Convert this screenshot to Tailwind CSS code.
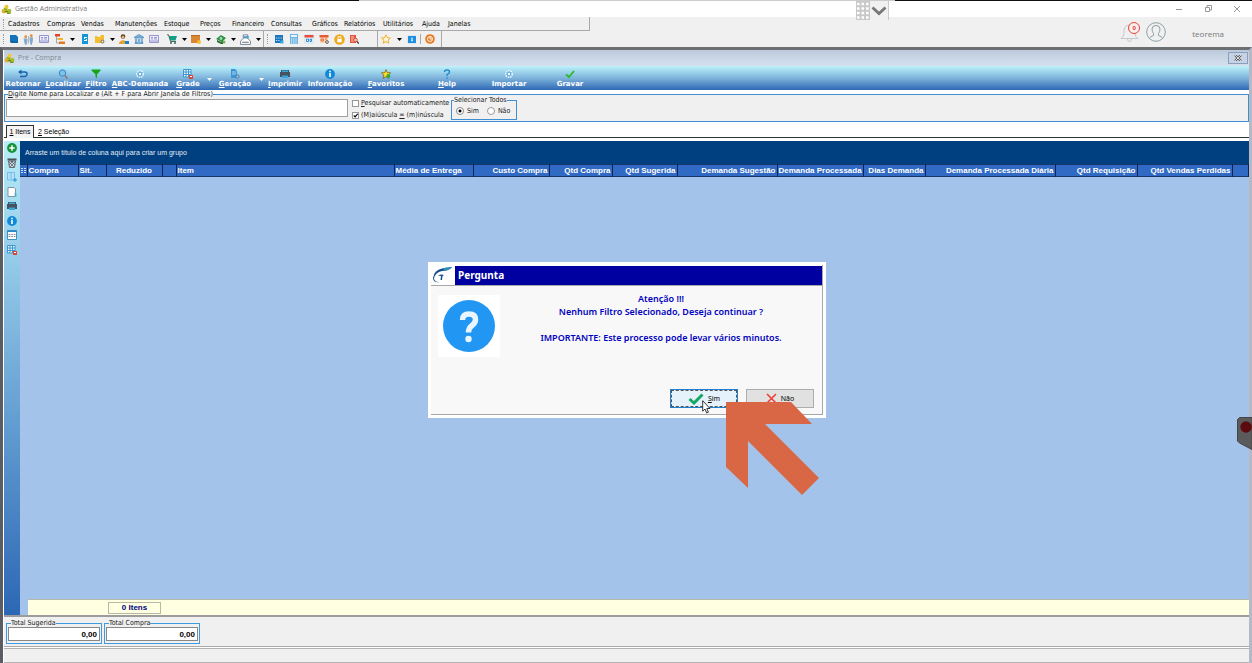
<!DOCTYPE html>
<html lang="pt-BR">
<head>
  <meta charset="UTF-8">
  <meta name="viewport" content="width=device-width, initial-scale=1">
  <title>Gestão Administrativa</title>
  <script src="https://cdn.jsdelivr.net/npm/@tailwindcss/browser@4"></script>
</head>
<body class="h-screen overflow-hidden bg-[#f0f0f0] font-['DejaVu_Sans_Condensed','DejaVu_Sans',sans-serif] text-[7px] leading-[10px] text-[#222]">

  <!-- shared icons -->
  <svg class="hidden">
    <symbol id="logo" viewBox="0 0 12 12"><path fill="#8fae22" d="M3 4h4v3h4v3l-4 1-1-2H1V6h2z"/><circle cx="6" cy="3" r="2.2" fill="#f2c62e"/><circle cx="3" cy="8" r="2.3" fill="#dcb52a"/><circle cx="9" cy="7.5" r="2.3" fill="#a9bf2f"/><path fill="#5f7f1a" d="M4 8h4v1H4zM7 10h3v1H7z"/></symbol>
    <symbol id="down" viewBox="0 0 5 3"><path fill="currentColor" d="M0 0h5L2.500 3z"/></symbol>
    <symbol id="book" viewBox="0 0 10 10"><path fill="#1273b8" d="M1 1h6l2 2v6H2L1 8z"/><path stroke="#0a4f86" stroke-width=".7" d="M2 8h7"/></symbol>
    <symbol id="people" viewBox="0 0 10 10"><g fill="#d9924a"><circle cx="2.500" cy="2.500" r="1.300"/><circle cx="7.500" cy="1.500" r="1.300"/></g><path fill="#7fa9cf" d="M1 4h3v3L3 10H2L1 7zM6 3h3v3L8 10H7L6 6z"/><path stroke="#9a9a9a" stroke-width=".6" d="M5 2v7M0 5l1-1"/></symbol>
    <symbol id="card" viewBox="0 0 10 10"><path fill="#eef" stroke="#8b8bc8" stroke-width=".9" d="M.5 1.500h9v7h-9z"/><path stroke="#8b8bc8" stroke-width=".9" d="M2 3.500h2M5 3.500h3M2 5h2M5 5h3M1 7h8"/></symbol>
    <symbol id="tree" viewBox="0 0 10 10"><path fill="#e0452f" d="M0 0h5v2.500H0z"/><path fill="#f2b632" d="M3 4h5v2H3z"/><path fill="#e67a21" d="M4 7.500h6V10H4z"/><path fill="none" stroke="#777" stroke-width=".6" d="M1.500 2v7H5M1.500 5H3"/></symbol>
    <symbol id="phone" viewBox="0 0 10 10"><path fill="#1596d6" d="M2 0h6v10H2z"/><path fill="#fff" d="M4 3h3v1H5v1h2v2H4V6h2V5H4z"/></symbol>
    <symbol id="folder" viewBox="0 0 10 10"><path fill="#f5bd30" d="M0 2h2l1 1h2l1-2h3v8H0z"/><circle cx="7.500" cy="7.500" r="2" fill="#9a8d70"/><circle cx="7.500" cy="7.500" r=".7" fill="#fff"/></symbol>
    <symbol id="user" viewBox="0 0 10 10"><circle cx="4" cy="2.500" r="2.300" fill="#5d3d25"/><circle cx="4" cy="3.200" r="1.400" fill="#f0b072"/><path fill="#e8a12b" d="M0 10c0-5 8-5 8 0z"/><path fill="#1780cf" d="M6 7h4v3H6z"/></symbol>
    <symbol id="bank" viewBox="0 0 10 10"><path fill="#78aedb" stroke="#3d82bd" stroke-width=".6" d="M.5 3L5 .5 9.500 3v1h-9zM1 8.500h8v1H1z"/><path stroke="#3d82bd" stroke-width="1.200" d="M2 4.500v4M8 4.500v4"/><path fill="#a8d2ef" d="M3.500 4.500h3v4h-3z"/><path stroke="#2770af" stroke-width=".8" d="M5 5v3"/></symbol>
    <symbol id="cart" viewBox="0 0 10 10"><path fill="#12a083" d="M2 2h8L8.500 6.500H3.500z"/><path fill="none" stroke="#35584f" stroke-width=".9" d="M0 .8h1.500L3.500 7.500H9"/><circle cx="4" cy="9" r=".9" fill="#35584f"/><circle cx="8" cy="9" r=".9" fill="#35584f"/></symbol>
    <symbol id="box" viewBox="0 0 10 10"><path fill="#d98733" d="M0 1h9v8H0z"/><path fill="#b96922" d="M0 1h9v1H0z"/><circle cx="8" cy="8" r="2" fill="#f5bd30"/></symbol>
    <symbol id="money" viewBox="0 0 10 10"><path fill="#2f9146" d="M0 5l5-4 5 3-4 4z"/><circle cx="5" cy="4.500" r="1.400" fill="#a9dbb1"/><path fill="#226c34" d="M1 6l4 2 2-1v3H5L1 8z"/><circle cx="8" cy="8" r="1.500" fill="#7fb04a"/></symbol>
    <symbol id="report" viewBox="0 0 10 10"><path fill="#fff" stroke="#6a7b8a" stroke-width=".8" d="M.5 6.500L3 4V.8h4V4l2.500 2.500v3h-9z"/><path fill="#4d9bc8" d="M3 2h5v2H3z"/><path stroke="#555" stroke-width=".8" d="M2 7.500h6"/></symbol>
    <symbol id="calendar" viewBox="0 0 10 10"><path fill="#1a76bf" d="M1 1h8v8H1z"/><path fill="#c9e6fa" d="M2 3.500h1.200v1H2zM4.300 3.500h1.200v1H4.300zM6.600 3.500h1.200v1H6.600zM2 6h1.200v1H2zM4.300 6h1.200v1H4.300z"/><path fill="#39aeea" d="M6.500 6.500H9.500v3H6.500z"/></symbol>
    <symbol id="calc" viewBox="0 0 10 10"><path fill="#6db4e2" d="M1 0h8v10H1z"/><path fill="#e8f6ff" d="M2 1h6v2H2z"/><path stroke="#fff" stroke-dasharray="1.200 1" d="M2 5h6M2 7h6M2 9h6"/></symbol>
    <symbol id="month" viewBox="0 0 10 10"><path fill="#eef7fd" stroke="#a8cfe8" stroke-width=".5" d="M1 1h8v8H1z"/><path fill="#e54c3f" d="M.5 1h9v2.500h-9z"/><path stroke="#2183c9" stroke-width=".9" d="M2.500 5h2v2.500h-2zM6 5h1.500v2.500H6z" fill="none"/></symbol>
    <symbol id="monthgear" viewBox="0 0 10 10"><path fill="#f7d9b4" d="M1 1h8v8H1z"/><path fill="#e35b37" d="M.5 1h9v2.500h-9z"/><path stroke="#e35b37" stroke-width=".9" d="M2 5h2.500v2H2zM6 5h2" fill="none"/><circle cx="8" cy="8" r="1.400" fill="none" stroke="#666"/></symbol>
    <symbol id="lock" viewBox="0 0 10 10"><circle cx="5" cy="5" r="4.800" fill="#efa91d"/><path fill="#fff" d="M3 4.500h4V7.500H3z"/><path fill="none" stroke="#fff" stroke-width=".8" d="M3.700 4.500V2.500h2.600v2"/></symbol>
    <symbol id="find" viewBox="0 0 10 10"><path fill="#e8543b" d="M1 1h6v8H1z"/><path stroke="#fff" stroke-width=".7" d="M2 3h3M2 5h3M2 7h3"/><circle cx="6.500" cy="6" r="1.800" fill="#f7c9b7" stroke="#c93823" stroke-width=".8"/><path stroke="#333" stroke-width="1.200" d="M8 7.500l1.800 2"/></symbol>
    <symbol id="star" viewBox="0 0 10 10"><path fill="#fff6d9" stroke="#f2a71b" stroke-width=".9" d="M5 .8l1.300 2.900 3.100.3-2.400 2.100.8 3.100L5 7.600 2.200 9.200 3 6.100.6 4l3.100-.3z"/></symbol>
    <symbol id="panel" viewBox="0 0 10 10"><path fill="#1f8fe0" d="M1 1h9v8H1z"/><path fill="#d6eeff" d="M4.500 3h2v4h-2z"/><path fill="#1f8fe0" d="M5 4h1v1H5z"/></symbol>
    <symbol id="power" viewBox="0 0 10 10"><circle cx="5" cy="5" r="4.800" fill="#e57b22"/><circle cx="5" cy="5" r="2.500" fill="none" stroke="#fff" stroke-width=".9"/><path fill="none" stroke="#fff" stroke-width=".9" d="M5 2.500V5h2"/></symbol>
    <symbol id="back" viewBox="0 0 10 10"><path fill="none" stroke="#1464b4" stroke-width="1.500" d="M1.500 3H7q2 0 2 2t-2 2.500H2"/><path fill="#1464b4" d="M0 3l3.500-2.500v5z"/></symbol>
    <symbol id="lens" viewBox="0 0 10 10"><circle cx="4.500" cy="4" r="3.200" fill="#7cc4ea" stroke="#3a86bd"/><path stroke="#8c7468" stroke-width="1.400" d="M7 6.500l2.500 3"/></symbol>
    <symbol id="funnel" viewBox="0 0 10 10"><path fill="#19a319" d="M.5.500h9v1L6 5.500V9.500L4.500 8V5.500L.5 1.500z"/></symbol>
    <symbol id="cog" viewBox="0 0 10 10"><circle cx="5" cy="5" r="3.200" fill="#5da9d9" stroke="#e6f7ff" stroke-width="1.600" stroke-dasharray="1.600 .7"/><circle cx="5" cy="5" r="1.200" fill="#fff"/></symbol>
    <symbol id="gridred" viewBox="0 0 10 10"><path fill="#e6f4fc" stroke="#3290cb" stroke-width=".9" d="M.5.500h7.500v7.500h-7.500zM3 .5v7.500M5.500.500v7.500M.5 3h7.500M.5 5.500h7.500"/><path fill="#e2452c" d="M6 6h4v4H6z"/><path fill="#fff" d="M7 7h2v1H7z"/></symbol>
    <symbol id="docgear" viewBox="0 0 10 10"><path fill="#3b94d4" d="M1 0h4l2 2v7H1z"/><path stroke="#d8efff" stroke-width=".7" d="M2 3h4M2 5h4"/><circle cx="7.500" cy="7.500" r="1.600" fill="#a0c9e8" stroke="#476f94" stroke-width=".9"/></symbol>
    <symbol id="printer" viewBox="0 0 10 10"><path fill="#47525e" d="M1 1h8v2h1v5H0V3h1z"/><path fill="#35a8d8" d="M2 1.500h6V3H2zM2 6.500h6V9H2z"/></symbol>
    <symbol id="info" viewBox="0 0 10 10"><circle cx="5" cy="5" r="4.900" fill="#1289d8"/><path fill="#fff" d="M4.200 1.800h1.600v1.500H4.200zM4.200 4h1.600v4H4.200z"/></symbol>
    <symbol id="fav" viewBox="0 0 12 12"><path fill="#ffdf20" stroke="#77571a" stroke-width=".9" d="M6 .7l1.500 3.600 4 .3-3 2.700 1 4L6 9.200l-3.500 2.100 1-4-3-2.700 4-.3z"/><circle cx="8.800" cy="8.500" r="2.400" fill="#2faa36"/></symbol>
    <symbol id="help" viewBox="0 0 10 10"><path fill="none" stroke="#1687cc" stroke-width="1.300" d="M2.500 3Q2.500.8 5 .8T7.500 3Q7.500 4.300 5 5.500V7M5 8.300v1.500"/></symbol>
    <symbol id="check" viewBox="0 0 10 10"><path fill="none" stroke="#2cba21" stroke-width="1.700" d="M1 5.500L4 8l5-6"/></symbol>
    <symbol id="plus" viewBox="0 0 10 10"><circle cx="5" cy="5" r="4.900" fill="#17933c"/><path stroke="#fff" stroke-width="1.500" d="M2.300 5h5.400M5 2.300v5.400"/></symbol>
    <symbol id="trash" viewBox="0 0 10 10"><path fill="#4b5155" d="M.5.500h9V2.500h-9z"/><path fill="#d3dde0" stroke="#4b5155" stroke-width=".8" d="M1.500 3h7l-1 6.500h-5z"/><path stroke="#4b5155" stroke-width=".7" d="M2 4l5 5M8 4L3 9M4 3l4 4M6 3L2 7"/></symbol>
    <symbol id="coladd" viewBox="0 0 10 10"><path fill="#b3e0f8" stroke="#69b4e2" stroke-width=".8" d="M.5.500h7v7.500H.5zM4 .500v7.500"/><path stroke="#2293d8" d="M6 8h4M8 6v4"/></symbol>
    <symbol id="page" viewBox="0 0 10 10"><path fill="#fff" stroke="#6d7f8a" stroke-width=".8" d="M1 .500h6l1.500 1.500v7.500H1z"/><path stroke="#4fb1e6" stroke-width=".9" d="M7 7h3M7 9h3"/></symbol>
    <symbol id="window" viewBox="0 0 10 10"><path fill="#fff" stroke="#2d87c4" stroke-width=".9" d="M.5.500h9v9h-9z"/><path fill="#2d87c4" d="M.5.500h9V2h-9z"/><path stroke="#8c9499" stroke-width="1.200" stroke-dasharray="2 .7" d="M1.500 4.500h7M1.500 6.500h7"/></symbol>
  </svg>

  <div class="relative flex h-full flex-col">

    <!-- title bar -->
    <div class="flex h-px shrink-0 bg-[#ccc]">
      <div class="w-[359px] bg-[#111]"></div>
      <div class="ml-auto w-[357px] bg-[#111]"></div>
    </div>
    <header class="flex h-4 shrink-0 items-center justify-between bg-white pl-px">
      <h1 class="flex items-center gap-[3px] font-['Open_Sans',sans-serif] text-[7px] text-[#777]">
        <svg class="size-[11px]"><use href="#logo"/></svg>Gestão Administrativa
      </h1>
      <div class="flex gap-[19px] pr-[10px] text-[#999]">
        <button aria-label="Minimizar"><svg class="size-[10px]" viewBox="0 0 10 10"><path stroke="currentColor" d="M2 5.500h6"/></svg></button>
        <button aria-label="Restaurar"><svg class="size-[10px]" viewBox="0 0 10 10" fill="none" stroke="currentColor"><path d="M2.500 3.500h4v4h-4zM4 3V1.500h4.500V6H7"/></svg></button>
        <button aria-label="Fechar"><svg class="size-[10px]" viewBox="0 0 10 10"><path stroke="currentColor" d="M2 2l6 6M8 2L2 8"/></svg></button>
      </div>
    </header>

    <div class="flex h-[30px] shrink-0 justify-between">
      <div>
        <nav class="flex h-[14px] w-[590px] items-center border-r border-b border-[#a8a8a8] pl-[3px] text-black">
          <span class="mr-1 h-[10px] border-l border-dotted border-[#999]"></span>
          <div class="grid grid-cols-[39px_34px_34px_49px_36px_32px_39px_41px_32px_39px_39px_26px_40px] text-left *:whitespace-nowrap *:text-left">
            <button>Cadastros</button><button>Compras</button><button>Vendas</button><button>Manutenções</button><button>Estoque</button><button>Preços</button><button>Financeiro</button><button>Consultas</button><button>Gráficos</button><button>Relatórios</button><button>Utilitários</button><button>Ajuda</button><button>Janelas</button>
          </div>
        </nav>
        <div class="flex h-4 w-[442px] items-center border-r border-[#a8a8a8] pl-[3px] text-black">
          <span class="mr-[3px] h-[10px] border-l border-dotted border-[#999]"></span>
          <div class="grid grid-cols-[14px_15px_16px_15px_10px_15px_15px_10px_14px_16px_18px_14px_10px_14px_10px_15px_10px_15px_10px] items-center *:flex *:justify-center">
            <button aria-label="Cadastro"><svg class="size-[10px]"><use href="#book"/></svg></button>
            <button aria-label="Pessoas"><svg class="size-[11px]"><use href="#people"/></svg></button>
            <button aria-label="Ficha"><svg class="size-[10px]"><use href="#card"/></svg></button>
            <button aria-label="Estrutura"><svg class="size-[10px]"><use href="#tree"/></svg></button>
            <button aria-label="Mais estrutura"><svg class="h-[3px] w-[5px]"><use href="#down"/></svg></button>
            <button aria-label="Telefone"><svg class="size-[10px]"><use href="#phone"/></svg></button>
            <button aria-label="Pasta"><svg class="size-[10px]"><use href="#folder"/></svg></button>
            <button aria-label="Mais pastas"><svg class="h-[3px] w-[5px]"><use href="#down"/></svg></button>
            <button aria-label="Cliente"><svg class="size-[10px]"><use href="#user"/></svg></button>
            <button aria-label="Banco"><svg class="size-[10px]"><use href="#bank"/></svg></button>
            <button class="pr-1" aria-label="Título"><svg class="size-[10px]"><use href="#card"/></svg></button>
            <button aria-label="Compras"><svg class="size-[10px]"><use href="#cart"/></svg></button>
            <button aria-label="Mais compras"><svg class="h-[3px] w-[5px]"><use href="#down"/></svg></button>
            <button aria-label="Produto"><svg class="size-[10px]"><use href="#box"/></svg></button>
            <button aria-label="Mais produtos"><svg class="h-[3px] w-[5px]"><use href="#down"/></svg></button>
            <button aria-label="Financeiro"><svg class="size-[10px]"><use href="#money"/></svg></button>
            <button aria-label="Mais financeiro"><svg class="h-[3px] w-[5px]"><use href="#down"/></svg></button>
            <button aria-label="Fiscal"><svg class="size-[11px]"><use href="#report"/></svg></button>
            <button aria-label="Mais fiscal"><svg class="h-[3px] w-[5px]"><use href="#down"/></svg></button>
          </div>
          <span class="h-4 border-l border-[#a8a8a8]"></span>
          <span class="ml-[3px] h-[10px] border-l border-dotted border-[#999]"></span>
          <div class="ml-[3px] grid grid-cols-[16px_14px_16px_14px_16px_14px] items-center *:flex *:justify-center">
            <button aria-label="Agenda"><svg class="size-[10px]"><use href="#calendar"/></svg></button>
            <button aria-label="Calculadora"><svg class="size-[10px]"><use href="#calc"/></svg></button>
            <button aria-label="Calendário"><svg class="size-[10px]"><use href="#month"/></svg></button>
            <button aria-label="Configurar calendário"><svg class="size-[10px]"><use href="#monthgear"/></svg></button>
            <button aria-label="Bloquear"><svg class="size-[11px]"><use href="#lock"/></svg></button>
            <button aria-label="Pesquisar"><svg class="size-[10px]"><use href="#find"/></svg></button>
          </div>
          <span class="ml-4 h-4 border-l border-[#a8a8a8]"></span>
          <div class="grid grid-cols-[16px_10px_14px] items-center *:flex *:justify-center">
            <button aria-label="Favoritos"><svg class="size-[10px]"><use href="#star"/></svg></button>
            <button aria-label="Mais favoritos"><svg class="h-[3px] w-[5px]"><use href="#down"/></svg></button>
            <button aria-label="Painel"><svg class="size-[9px]"><use href="#panel"/></svg></button>
          </div>
          <span class="mx-[2px] h-[10px] border-l border-[#a8a8a8]"></span>
          <button class="flex w-[14px] justify-center" aria-label="Sair"><svg class="size-[10px]"><use href="#power"/></svg></button>
        </div>
      </div>
      <div class="flex items-center gap-[6px] pr-7 font-['Open_Sans',sans-serif] text-[8px] text-[#777]">
        <button class="relative" aria-label="Notificações">
          <svg class="size-5" viewBox="0 0 20 20" fill="none" stroke="#c4c8ca"><path d="M1 16.500h17q-3-2-3-5V8q-1-5-5.500-5T4 8v3.500q0 3-3 5zM7.500 17q0 2.500 2 2.500t2-2.500"/></svg>
          <span class="absolute top-0 left-2 flex size-3 items-center justify-center rounded-full border border-[#e5453a] bg-[#f8f0f0] text-[6px] font-bold text-[#e5453a]">0</span>
        </button>
        <svg class="size-5" viewBox="0 0 20 20" fill="none" stroke="#8e9fa5"><circle cx="10" cy="10" r="9.300"/><path d="M3.500 16q1-1.500 4-2.500v-2Q6 9.500 6 7q0-3.500 4-3.500T14 7q0 2.500-1.500 4.500v2q3 1 4 2.500"/></svg>
        <span class="ml-5 pt-1">teorema</span>
      </div>
    </div>

    <!-- Pré - Compra window -->
    <main class="flex min-h-0 flex-1 flex-col border-t-[3px] border-r-[3px] border-l-[3px] border-t-[#6c6f72] border-r-[#b3b9c6] border-l-[#5a5d61] bg-white pl-px">
      <div class="flex h-4 shrink-0 items-center justify-between bg-linear-to-b from-[#bccadb] to-[#d6e1ef] pr-px">
        <h2 class="flex items-center gap-[3px] font-['Open_Sans',sans-serif] text-[7px] text-[#7f8993]">
          <svg class="size-[11px]"><use href="#logo"/></svg>Pré - Compra
        </h2>
        <button class="flex h-3 w-5 items-center justify-center border border-[#8d9ebc] bg-[#c6d3e6]" aria-label="Fechar janela">
          <svg class="h-[6px] w-2" viewBox="0 0 8 6"><path stroke="#555" stroke-width="2.200" d="M1 0l6 6M7 0L1 6"/><path stroke="#fff" stroke-width=".8" d="M1 0l6 6M7 0L1 6"/></svg>
        </button>
      </div>

      <div class="grid h-6 shrink-0 grid-cols-[38px_42px_24px_64px_32px_10px_42px_10px_38px_52px_60px_62px_62px_60px] bg-linear-to-b from-[#bdf3fb] via-[#7fb4dc] to-[#2e68b3] pt-[3px] font-['DejaVu_Sans',sans-serif] text-[7px] font-bold text-white *:flex *:flex-col *:items-center *:whitespace-nowrap">
        <button><svg class="size-[10px]"><use href="#back"/></svg>Retornar</button>
        <button><svg class="size-[10px]"><use href="#lens"/></svg><span><u>L</u>ocalizar</span></button>
        <button><svg class="size-[10px]"><use href="#funnel"/></svg><span><u>F</u>iltro</span></button>
        <button><svg class="size-[10px]"><use href="#cog"/></svg><span><u>A</u>BC-Demanda</span></button>
        <button><svg class="size-[10px]"><use href="#gridred"/></svg><span><u>G</u>rade</span></button>
        <button class="justify-center" aria-label="Mais grade"><svg class="h-[3px] w-[5px]"><use href="#down"/></svg></button>
        <button><svg class="size-[10px]"><use href="#docgear"/></svg><span><u>G</u>eração</span></button>
        <button class="justify-center" aria-label="Mais geração"><svg class="h-[3px] w-[5px]"><use href="#down"/></svg></button>
        <button><svg class="size-[10px]"><use href="#printer"/></svg><span><u>I</u>mprimir</span></button>
        <button><svg class="size-[10px]"><use href="#info"/></svg>Informação</button>
        <button><svg class="h-[10px] w-3"><use href="#fav"/></svg><span><u>F</u>avoritos</span></button>
        <button><svg class="size-[10px]"><use href="#help"/></svg><span><u>H</u>elp</span></button>
        <button><svg class="size-[10px]"><use href="#cog"/></svg>Importar</button>
        <button><svg class="size-[10px]"><use href="#check"/></svg>Gravar</button>
      </div>

      <form class="shrink-0">
        <fieldset class="h-8 border border-[#3f8fd2] bg-[#f0f0f0]">
          <legend class="ml-[3px] h-2 leading-2"><label for="nome"><u>D</u>igite Nome para Localizar e (Alt + F para Abrir Janela de Filtros)</label></legend>
          <div class="flex h-[22px] items-start">
            <input id="nome" type="text" class="ml-px mt-px h-[18px] w-[342px] border border-[#a0a0a0] bg-white px-1 outline-none">
            <div class="ml-1 flex w-[99px] flex-col gap-[2px] whitespace-nowrap">
              <label class="flex items-center gap-[2px]"><input type="checkbox" class="size-[7px] appearance-none border border-[#999] bg-white"><span><u>P</u>esquisar automaticamente</span></label>
              <label class="flex items-center gap-[2px]"><input type="checkbox" checked class="peer sr-only"><svg class="size-[7px] border border-[#999] bg-white" viewBox="0 0 7 7"><path fill="none" stroke="#000" stroke-width="1.500" d="M1 3.500L3 5.500 6.500 1"/></svg><span>(M)aiúscula <u>=</u> (m)inúscula</span></label>
            </div>
            <fieldset class="h-[22px] w-[66px] border border-[#3f8fd2]">
              <legend class="ml-[2px] h-1 leading-1 whitespace-nowrap">Selecionar Todos</legend>
              <div class="flex items-center gap-2 pt-1 pl-1">
                <label class="flex items-center gap-[3px]"><input type="radio" name="sel" checked class="size-2 appearance-none rounded-full border border-[#888] bg-white bg-radial from-black from-30% to-white to-40%">Sim</label>
                <label class="flex items-center gap-[3px]"><input type="radio" name="sel" class="size-2 appearance-none rounded-full border border-[#999] bg-white">Não</label>
              </div>
            </fieldset>
          </div>
        </fieldset>
      </form>

      <div class="mt-[2px] flex h-[14px] shrink-0 items-end border-b border-[#333] pl-[2px] font-['Liberation_Sans',sans-serif] text-[7px] text-black" role="tablist">
        <button role="tab" class="-mb-px h-[13px] w-7 border border-b-0 border-[#333] bg-[#f4f4f4]"><u>1</u> Itens</button>
        <button role="tab" class="h-[11px] px-1"><u>2</u> Seleção</button>
      </div>

      <!-- grid area -->
      <div class="mt-[3px] flex min-h-0 flex-1 border-b-2 border-[#9c9c9c]">
        <div class="w-4 shrink-0 bg-linear-to-b from-[#b9edf8] to-[#2c67b4] pt-[2px]">
          <div class="flex h-28 flex-col items-center justify-between">
            <button aria-label="Adicionar"><svg class="size-[10px]"><use href="#plus"/></svg></button>
            <button aria-label="Excluir"><svg class="size-[10px]"><use href="#trash"/></svg></button>
            <button aria-label="Inserir coluna"><svg class="size-[10px]"><use href="#coladd"/></svg></button>
            <button aria-label="Página"><svg class="size-[10px]"><use href="#page"/></svg></button>
            <button aria-label="Imprimir grade"><svg class="size-[10px]"><use href="#printer"/></svg></button>
            <button aria-label="Informação do item"><svg class="size-[10px]"><use href="#info"/></svg></button>
            <button aria-label="Visualizar"><svg class="size-[10px]"><use href="#window"/></svg></button>
            <button aria-label="Salvar grade"><svg class="size-[10px]"><use href="#gridred"/></svg></button>
          </div>
        </div>
        <div class="flex min-w-0 flex-1 flex-col bg-[#a4c3ea] font-['Liberation_Sans',sans-serif]">
          <p class="h-[23px] shrink-0 bg-[#004080] pl-[5px] text-[7px] leading-[23px] text-[#e4ecf5]">Arraste um título de coluna aqui para criar um grupo</p>
          <table class="w-full table-fixed border-collapse bg-[#316ac5] text-[8px] text-white">
            <colgroup>
              <col class="w-[7px]"><col class="w-[51px]"><col class="w-[28px]"><col class="w-[56px]"><col class="w-[14px]"><col class="w-[218px]"><col class="w-[79px]"><col class="w-[76px]"><col class="w-[63px]"><col class="w-[65px]"><col class="w-[100px]"><col class="w-[86px]"><col class="w-[62px]"><col class="w-[130px]"><col class="w-[82px]"><col class="w-[95px]"><col>
            </colgroup>
            <thead>
              <tr class="h-3 border-y border-[#16356a] *:overflow-hidden *:border-r *:border-[#0c2554] *:px-px *:text-right *:leading-[10px] *:font-bold *:whitespace-nowrap">
                <th><svg class="h-2 w-[5px]" viewBox="0 0 5 8"><path stroke="#c9dcff" stroke-dasharray="2 1" d="M0 1.500h5M0 3.500h5M0 5.500h5"/></svg></th>
                <th class="text-left!">Compra</th><th class="text-left!">Sit.</th><th class="text-center!">Reduzido</th><th></th><th class="text-left!">Item</th><th class="text-left!">Média de Entrega</th><th>Custo Compra</th><th>Qtd Compra</th><th>Qtd Sugerida</th><th>Demanda Sugestão</th><th>Demanda Processada</th><th>Dias Demanda</th><th>Demanda Processada Diária</th><th>Qtd Requisição</th><th>Qtd Vendas Perdidas</th><th></th>
              </tr>
            </thead>
          </table>
          <div class="mt-auto ml-2 flex h-4 shrink-0 items-center border-t border-[#b8b8a8] bg-[#ffffe1] pl-20">
            <output class="h-3 w-[53px] border border-[#b8b8a8] text-center text-[8px] font-bold text-[#000080]">0 Itens</output>
          </div>
        </div>
      </div>

      <!-- totals -->
      <div class="flex h-[30px] shrink-0 gap-[2px] border-b border-[#aaa] bg-[#f0f0f0] pt-[2px] pl-[2px]">
        <fieldset class="h-[25px] w-24 border border-[#3f9be0] px-px">
          <legend class="ml-[3px] h-2 leading-2"><label for="sugerida">Total Sugerida</label></legend>
          <input id="sugerida" type="text" value="0,00" class="block h-[14px] w-full border border-[#888] bg-white pr-[2px] text-right font-['Liberation_Sans',sans-serif] text-[8px] font-bold text-black">
        </fieldset>
        <fieldset class="h-[25px] w-24 border border-[#3f9be0] px-px">
          <legend class="ml-[3px] h-2 leading-2"><label for="compra">Total Compra</label></legend>
          <input id="compra" type="text" value="0,00" class="block h-[14px] w-full border border-[#888] bg-white pr-[2px] text-right font-['Liberation_Sans',sans-serif] text-[8px] font-bold text-black">
        </fieldset>
      </div>
      <footer class="mt-px h-[15px] shrink-0 border-y border-[#b4b4b4] bg-[#f0f0f0]"></footer>
    </main>

    <!-- capture bar handle -->
    <div class="absolute top-px left-[856px] flex h-[19px] border-r border-[#ccc] bg-[#f0f0f0]">
      <svg class="h-[19px] w-[14px]" viewBox="0 0 14 19"><path fill="#c8c8c8" d="M0 0h14v19H0z"/><path stroke="#fff" stroke-width="2.600" stroke-dasharray="2.600 1.900" d="M1 3h12M1 7.500h12M1 12h12M1 16.500h12"/></svg>
      <svg class="h-[19px] w-[18px]" viewBox="0 0 18 19"><path fill="none" stroke="#777" stroke-width="2.800" d="M2.500 6.500L9 12.500l6.500-6"/></svg>
    </div>

    <!-- recorder tab -->
    <svg class="absolute top-[417px] right-0 h-[33px] w-[15px]" viewBox="0 0 15 33"><path fill="#5b5b5b" stroke="#444" d="M15 .5H2.500l-2 2V24l2 2L15 32.500z"/><circle cx="9" cy="10" r="5.700" fill="#5c0a0e"/></svg>

    <!-- dialog -->
    <div role="dialog" aria-labelledby="dlg" class="absolute top-[262px] left-1/2 ml-px flex h-[156px] w-[398px] -translate-x-1/2 bg-white p-[3px] font-['Noto_Sans',sans-serif]">
      <div class="flex w-full flex-col border-r border-b border-[#a8a8a8] bg-[#f8f8f8]">
        <div class="flex h-[21px] shrink-0 border-b border-[#a8a8a8] bg-white pt-px">
          <svg class="h-5 w-6" viewBox="0 0 24 20"><path fill="#174f8c" d="M2 12Q3 4 11 2.500T21 1Q18 5 11 5 4 6.500 3 12.500 3.500 16 9 16.500 2 16.500 2 12z"/><path fill="#2793b8" d="M12 2.500Q18 1 21 1q-3 3.500-8 3.500z"/><path fill="#174f8c" d="M7 9.500q3-1.500 6-.5l-1.500 1-.5 4h-1.500l.5-4z"/></svg>
          <h3 id="dlg" class="flex-1 bg-[#0000a0] pl-[3px] text-[10px] leading-[19px] font-bold text-white">Pergunta</h3>
        </div>
        <div class="flex flex-1 pt-[9px] pl-[7px]">
          <div class="flex size-[62px] items-center justify-center bg-white">
            <svg class="size-[52px]" viewBox="0 0 52 52"><circle cx="26" cy="26" r="26" fill="#2196f3"/><path fill="none" stroke="#eaf6ff" stroke-width="5.500" d="M19.500 20q0-6 6.500-6t6.500 5.500q0 3.500-3.500 6t-3.500 7"/><circle cx="25.500" cy="39" r="3.200" fill="#eaf6ff"/></svg>
          </div>
          <p class="-mt-[3px] flex-1 text-center text-[9px] leading-[13px] font-semibold text-[#0000c0]">Atenção !!!<br>Nenhum Filtro Selecionado, Deseja continuar ?<br><br>IMPORTANTE: Este processo pode levar vários minutos.</p>
        </div>
        <div class="flex justify-end gap-2 pr-2 pb-[6px] text-[7px] text-black">
          <button class="flex h-[19px] w-[68px] items-center justify-center gap-1 border border-[#1f7fd0] bg-[#e5f1fb] outline-1 -outline-offset-2 outline-dashed outline-[#555]"><svg class="h-3 w-4" viewBox="0 0 16 12"><path fill="none" stroke="#15a865" stroke-width="3" d="M1.500 6L6 10l8.500-8.500"/></svg><span><u>S</u>im</span></button>
          <button class="flex h-[19px] w-[68px] items-center justify-center gap-1 border border-[#adadad] bg-[#e1e1e1]"><svg class="size-[11px]" viewBox="0 0 11 11"><path stroke="#ee3a30" stroke-width="1.500" d="M1 1l9 9M10 1L1 10"/></svg><span><u>N</u>ão</span></button>
        </div>
      </div>
      <svg class="absolute top-[138px] left-[274px] h-[14px] w-[9px]" viewBox="0 0 9 14"><path fill="#fff" stroke="#222" stroke-width=".9" d="M.7.700v10.500L3 9l1.700 4 1.700-.8L4.800 8.500H8z"/></svg>
      <svg class="absolute top-[140px] left-[298px] h-[93px] w-[93px]" viewBox="0 0 93 93"><path fill="#d96645" d="M0 0h65l21 22H39l54 54-17 17-54-54v47L0 65z"/></svg>
    </div>
  </div>

</body>
</html>
